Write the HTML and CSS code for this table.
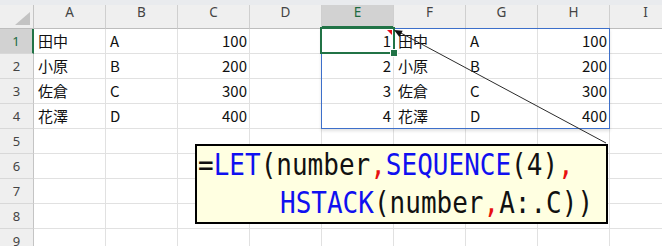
FILE: index.html
```html
<!DOCTYPE html>
<html lang="ja">
<head>
<meta charset="utf-8">
<link rel="stylesheet" href="styles.css">
</head>
<body>
<div class="sheet">
  <div class="strip"></div>
  <div class="grid">
    <div class="corner"><span class="tri"></span></div>
    <div class="ch">A</div><div class="ch">B</div><div class="ch">C</div><div class="ch">D</div>
    <div class="ch sel">E</div><div class="ch">F</div><div class="ch">G</div><div class="ch">H</div><div class="ch">I</div>

    <div class="rh sel">1</div>
    <div class="c">田中</div><div class="c">A</div><div class="c n">100</div><div class="c"></div>
    <div class="c n">1</div><div class="c">田中</div><div class="c">A</div><div class="c n">100</div><div class="c"></div>

    <div class="rh">2</div>
    <div class="c">小原</div><div class="c">B</div><div class="c n">200</div><div class="c"></div>
    <div class="c n">2</div><div class="c">小原</div><div class="c">B</div><div class="c n">200</div><div class="c"></div>

    <div class="rh">3</div>
    <div class="c">佐倉</div><div class="c">C</div><div class="c n">300</div><div class="c"></div>
    <div class="c n">3</div><div class="c">佐倉</div><div class="c">C</div><div class="c n">300</div><div class="c"></div>

    <div class="rh">4</div>
    <div class="c">花澤</div><div class="c">D</div><div class="c n">400</div><div class="c"></div>
    <div class="c n">4</div><div class="c">花澤</div><div class="c">D</div><div class="c n">400</div><div class="c"></div>

    <div class="rh">5</div>
    <div class="c"></div><div class="c"></div><div class="c"></div><div class="c"></div><div class="c"></div><div class="c"></div><div class="c"></div><div class="c"></div><div class="c"></div>
    <div class="rh">6</div>
    <div class="c"></div><div class="c"></div><div class="c"></div><div class="c"></div><div class="c"></div><div class="c"></div><div class="c"></div><div class="c"></div><div class="c"></div>
    <div class="rh">7</div>
    <div class="c"></div><div class="c"></div><div class="c"></div><div class="c"></div><div class="c"></div><div class="c"></div><div class="c"></div><div class="c"></div><div class="c"></div>
    <div class="rh">8</div>
    <div class="c"></div><div class="c"></div><div class="c"></div><div class="c"></div><div class="c"></div><div class="c"></div><div class="c"></div><div class="c"></div><div class="c"></div>
    <div class="rh">9</div>
    <div class="c"></div><div class="c"></div><div class="c"></div><div class="c"></div><div class="c"></div><div class="c"></div><div class="c"></div><div class="c"></div><div class="c"></div>
  </div>

  <div class="spill"></div>
  <div class="active"><span class="note"></span><span class="handle"></span></div>

  <svg class="arrow" width="662" height="246" viewBox="0 0 662 246">
    <line x1="399" y1="32" x2="606" y2="143" stroke="#2b2b2b" stroke-width="1"/>
    <polygon points="394,30 402.7,30.7 399.4,36.9" fill="#111"/>
  </svg>

  <div class="formula">
    <div class="code">
      <div class="line"><span>=</span><span class="fn">LET</span><span>(number</span><span class="cm">,</span><span class="fn">SEQUENCE</span><span>(4)</span><span class="cm">,</span></div>
      <div class="line l2"><span class="fn">HSTACK</span><span>(number</span><span class="cm">,</span><span>A:.C))</span></div>
    </div>
  </div>
</div>
</body>
</html>
```

FILE: styles.css
```css
html, body {
  margin: 0;
  padding: 0;
  background: #fff;
}
.sheet {
  position: relative;
  width: 662px;
  height: 246px;
  overflow: hidden;
  font-family: "Noto Sans CJK JP", "Noto Sans", sans-serif;
}
.strip {
  height: 5px;
  background: #e9ebee;
}
.grid {
  display: grid;
  grid-template-columns: 34px repeat(8, 72px) 72px;
  grid-template-rows: 24px repeat(9, 25px);
}
.grid > div {
  box-sizing: border-box;
}
.corner {
  position: relative;
  background: #efefef;
  border-right: 1px solid #c4c4c4;
  border-bottom: 1px solid #bdbdbd;
}
.tri {
  position: absolute;
  right: 3px;
  bottom: 3px;
  width: 0;
  height: 0;
  border-left: 15px solid transparent;
  border-bottom: 13px solid #c3c3c3;
}
.ch {
  background: #efefef;
  border-right: 1px solid #cfcfcf;
  border-bottom: 1px solid #bdbdbd;
  color: #444;
  font-family: "Noto Sans", sans-serif;
  font-size: 13.5px;
  display: flex;
  align-items: center;
  justify-content: center;
  padding-bottom: 7px;
  line-height: 1;
}
.ch.sel {
  background: #d2d2d2;
  color: #1e6b41;
  box-shadow: inset 0 -2px 0 #217346;
}
.rh {
  background: #efefef;
  border-right: 1px solid #c4c4c4;
  border-bottom: 1px solid #d8d8d8;
  color: #444;
  font-family: "Noto Sans", sans-serif;
  font-size: 13px;
  display: flex;
  align-items: center;
  justify-content: center;
  line-height: 1;
}
.rh.sel {
  background: #d2d2d2;
  color: #1e6b41;
  border-right: 2px solid #217346;
}
.c {
  border-right: 1px solid #e1e1e1;
  border-bottom: 1px solid #e1e1e1;
  font-size: 15px;
  color: #111;
  display: flex;
  align-items: center;
  padding: 0 2px 2px 4px;
  line-height: 1;
  white-space: nowrap;
}
.c.n {
  justify-content: flex-end;
}
.spill {
  position: absolute;
  left: 321px;
  top: 28px;
  width: 289px;
  height: 101px;
  box-sizing: border-box;
  border: 1px solid #3d6fca;
  box-shadow: 0 2px 3px rgba(0, 0, 0, 0.12);
}
.active {
  position: absolute;
  left: 320px;
  top: 27px;
  width: 75px;
  height: 27px;
  box-sizing: border-box;
  border: 2px solid #217346;
}
.note {
  position: absolute;
  right: 1px;
  top: 1px;
  width: 0;
  height: 0;
  border-left: 5px solid transparent;
  border-top: 5px solid #e8101a;
}
.handle {
  position: absolute;
  right: -5px;
  bottom: -5px;
  width: 6px;
  height: 6px;
  background: #217346;
  border: 1px solid #fff;
}
.arrow {
  position: absolute;
  left: 0;
  top: 0;
  pointer-events: none;
}
.formula {
  position: absolute;
  left: 195px;
  top: 144px;
  width: 413px;
  height: 80px;
  box-sizing: border-box;
  border: 2px solid #000;
  background: #ffffe1;
  overflow: hidden;
}
.code {
  transform: scaleY(1.16);
  transform-origin: 0 0;
  font-family: "DejaVu Sans Mono", "Liberation Mono", monospace;
  font-size: 26px;
  line-height: 33px;
  color: #111;
  padding-left: 1px;
}
.line {
  white-space: pre;
  height: 33px;
}
.line.l2 {
  padding-left: 82px;
}
.fn {
  color: #1010f0;
}
.cm {
  color: #e81010;
}
```
